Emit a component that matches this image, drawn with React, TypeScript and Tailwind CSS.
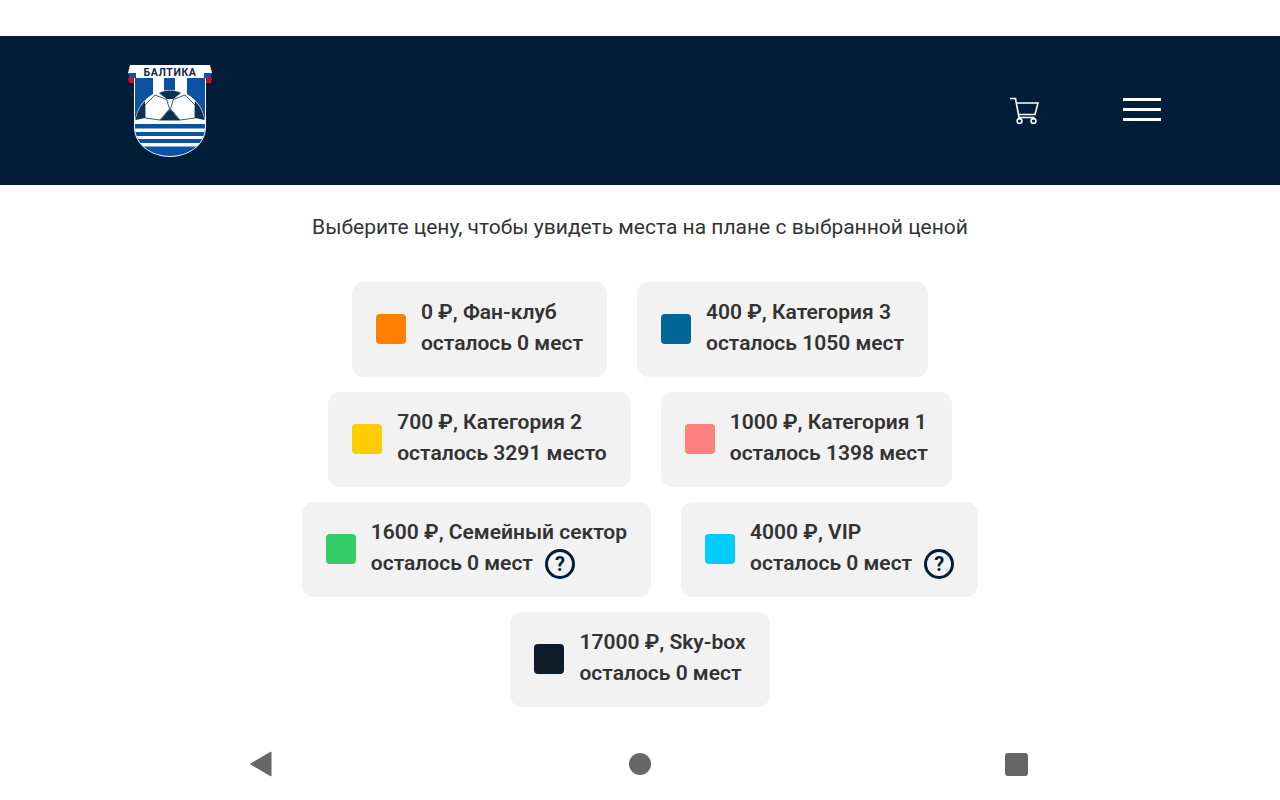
const CATEGORIES = [
  [
    { color: 'bg-[#ff8000]', title: '0 ₽, Фан-клуб', left: 'осталось 0 мест' },
    { color: 'bg-[#006699]', title: '400 ₽, Категория 3', left: 'осталось 1050 мест' },
  ],
  [
    { color: 'bg-[#ffcc00]', title: '700 ₽, Категория 2', left: 'осталось 3291 место' },
    { color: 'bg-[#ff8080]', title: '1000 ₽, Категория 1', left: 'осталось 1398 мест' },
  ],
  [
    { color: 'bg-[#33cc66]', title: '1600 ₽, Семейный сектор', left: 'осталось 0 мест', help: true },
    { color: 'bg-[#00ccff]', title: '4000 ₽, VIP', left: 'осталось 0 мест', help: true },
  ],
  [{ color: 'bg-[#0d1b2a]', title: '17000 ₽, Sky-box', left: 'осталось 0 мест' }],
]

function Logo() {
  return (
    <svg width="84" height="92" viewBox="0 0 84 92" className="block">
      <defs>
        <clipPath id="shield">
          <path d="M7 13 H77 V62 C77 80 60 91 42 91 C24 91 7 80 7 62 Z" />
        </clipPath>
      </defs>
      {/* shield */}
      <path d="M6 12 H78 V62 C78 80 60 92 42 92 C24 92 6 80 6 62 Z" fill="#ffffff" />
      <g clipPath="url(#shield)">
        <rect x="6" y="12" width="72" height="80" fill="#0c52a3" />
        <rect x="25" y="12" width="11" height="20" fill="#ffffff" />
        <rect x="47" y="12" width="12" height="20" fill="#ffffff" />
        {/* ball */}
        <path d="M7 56 C9 38 24 25 42 25 C60 25 75 38 77 56 Z" fill="#ffffff" />
        <path d="M31 28 C36 24.5 48 24.5 53 28 L45.3 34 H38.7 Z" fill="#10304f" />
        <path d="M7.5 55 C9 47 12 41 17 36 V53 Z" fill="#10304f" />
        <path d="M76.5 55 C75 47 72 41 67 36 V53 Z" fill="#10304f" />
        <path d="M32 55.5 L42 44 L52 55.5 Z" fill="#10304f" />
        <path d="M17 53 V40 L27 30 L38.7 34.5 L41.5 44 L32 55 Z" fill="none" stroke="#10304f" strokeWidth="0.8" />
        <path d="M67 53 V40 L57 30 L45.3 34.5 L42.5 44 L52 55 Z" fill="none" stroke="#10304f" strokeWidth="0.8" />
        {/* bands */}
        <rect x="6" y="56" width="72" height="3" fill="#ffffff" />
        <rect x="6" y="63.5" width="72" height="3.5" fill="#ffffff" />
        <rect x="6" y="71" width="72" height="3" fill="#ffffff" />
        <rect x="6" y="78" width="72" height="3.5" fill="#ffffff" />
      </g>
      {/* ribbon */}
      <path d="M0 13 H5 L6 18 H1 Z" fill="#d0102a" />
      <path d="M84 13 H79 L78 18 H83 Z" fill="#d0102a" />
      <path d="M2 0 H82 L84 8 L76 13 H8 L0 8 Z" fill="#ffffff" />
      <path d="M1 8 H8 V13 H1 Z" fill="#1c4f9e" />
      <path d="M83 8 H76 V13 H83 Z" fill="#1c4f9e" />
      <text x="42" y="10.8" textAnchor="middle" fontFamily="Roboto, sans-serif" fontWeight="700" fontSize="10.5" letterSpacing="0.6" fill="#0f2a45">БАЛТИКА</text>
    </svg>
  )
}

function Cart() {
  return (
    <svg width="30" height="28" viewBox="0 0 30 28" fill="none" stroke="#fff" strokeWidth="1.6">
      <path d="M1 1.5 H6.5 L10 20.5 H25.5" />
      <path d="M7.5 6 H29 L26 17.5 H9.5" />
      <circle cx="10.5" cy="24" r="2.4" />
      <circle cx="24.5" cy="24" r="2.4" />
    </svg>
  )
}

function Help() {
  return (
    <span className="ml-3 mt-px flex h-[30px] w-[30px] shrink-0 items-center justify-center rounded-full border-[3px] border-[#011d38] text-[20px] font-bold leading-none text-[#011d38]">
      ?
    </span>
  )
}

export default function App() {
  return (
    <div className="min-h-[800px] bg-white pt-9 font-['Roboto',sans-serif] text-[#333333]">
      <header className="flex h-[149px] items-center justify-between bg-[#011d38] pl-[128px] pr-[119px]">
        <Logo />
        <div className="flex items-center gap-[84px]">
          <Cart />
          <div className="mb-0.5 flex w-[38px] flex-col gap-[7.5px]">
            <div className="h-[2.5px] bg-white" />
            <div className="h-[2.5px] bg-white" />
            <div className="h-[2.5px] bg-white" />
          </div>
        </div>
      </header>

      <p className="mt-[30px] text-center text-[21px] leading-[24px]">
        Выберите цену, чтобы увидеть места на плане с выбранной ценой
      </p>

      <div className="mt-[43px] flex flex-col gap-[15px]">
        {CATEGORIES.map((row, i) => (
          <div key={i} className="flex justify-center gap-[30px]">
            {row.map((c) => (
              <div key={c.title} className="flex h-[95px] items-center rounded-[12px] bg-[#f2f2f2] px-6">
                <span className={`mb-px mr-[15px] h-[30px] w-[30px] shrink-0 rounded-[4px] ${c.color}`} />
                <div className="mb-1 text-[21px] font-semibold leading-[31px]">
                  <div>{c.title}</div>
                  <div className="flex items-start">
                    {c.left}
                    {c.help && <Help />}
                  </div>
                </div>
              </div>
            ))}
          </div>
        ))}
      </div>

      <nav className="mt-[40px] flex h-[34px] items-center justify-between pl-[249px] pr-[252px]">
        <svg width="23" height="26" viewBox="0 0 23 26">
          <path d="M22 1 V25 L1.5 13 Z" fill="#666666" stroke="#666666" strokeLinejoin="round" />
        </svg>
        <span className="ml-[3px] h-[22px] w-[22px] rounded-full bg-[#666666]" />
        <span className="h-[23px] w-[23px] rounded-[3px] bg-[#666666]" />
      </nav>
    </div>
  )
}
